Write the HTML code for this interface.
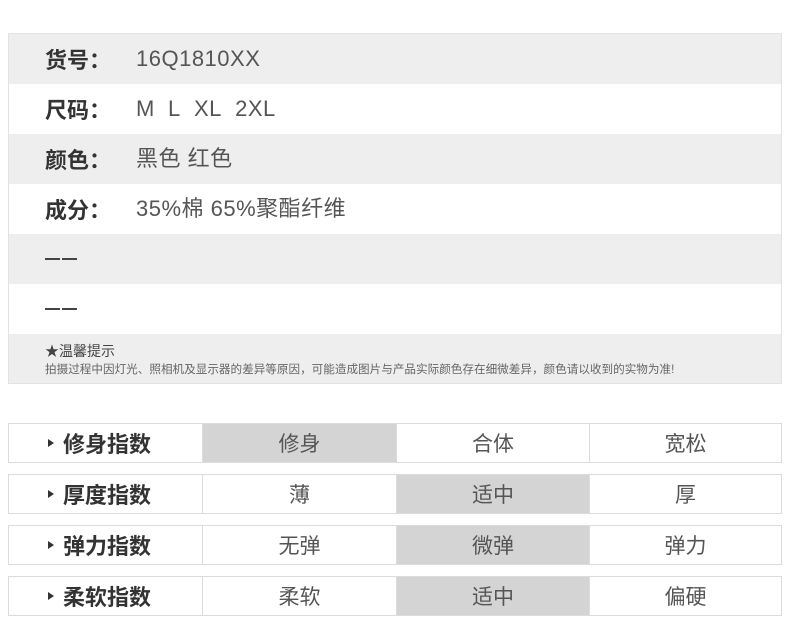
<!DOCTYPE html>
<html><head><meta charset="utf-8"><style>
*{margin:0;padding:0;box-sizing:border-box}
body{width:790px;height:638px;background:#fff;position:relative;overflow:hidden;font-family:"Liberation Sans","Noto Sans CJK SC",sans-serif;color:#444}
.box{position:absolute;left:8px;top:33px;width:774px;height:351px;border:1px solid #e2e2e2}
.r{position:absolute;left:0;width:772px;height:50px;line-height:50px}
.g{background:#eeeeee}
.lb{position:absolute;left:36px;top:0;font-size:22px;font-weight:bold;color:#333;font-family:"Noto Sans CJK SC",sans-serif}
.v{position:absolute;left:127px;top:0;font-size:22px;color:#555;letter-spacing:0.5px}
.dash{position:absolute;left:36px;top:24px;width:15px;height:2px;background:#444}
.dash2{left:53px}
.note{position:absolute;left:0;top:300px;width:772px;height:49px;background:#eeeeee}
.t{position:absolute;left:8px;width:774px;height:40px;border:1px solid #dcdcdc}
.c{position:absolute;top:0;height:38px;border-left:1px solid #dcdcdc;text-align:center;font-size:21px;line-height:38px;color:#555;font-family:"Noto Sans CJK SC",sans-serif;font-weight:normal}
.c0{left:0;width:193px;border-left:none;text-align:left;padding-left:54px;font-weight:bold;color:#333;font-size:22px}
.c0::before{content:"";position:absolute;left:39px;top:15px;border-left:6px solid #333;border-top:4px solid transparent;border-bottom:4px solid transparent}
.c1{left:193px;width:194px}.c2{left:387px;width:193px}.c3{left:580px;width:192px}
.h{background:#d4d4d4}
</style></head><body>
<div class="box">
<div class="r g" style="top:0"><span class="lb">货号：</span><span class="v">16Q1810XX</span></div>
<div class="r" style="top:50px"><span class="lb">尺码：</span><span class="v">M&nbsp; L&nbsp; XL&nbsp; 2XL</span></div>
<div class="r g" style="top:100px"><span class="lb">颜色：</span><span class="v">黑色&nbsp;红色</span></div>
<div class="r" style="top:150px"><span class="lb">成分：</span><span class="v">35%棉&nbsp;65%聚酯纤维</span></div>
<div class="r g" style="top:200px"><span class="dash"></span><span class="dash dash2"></span></div>
<div class="r" style="top:250px"><span class="dash"></span><span class="dash dash2"></span></div>
<div class="note"><div style="position:absolute;left:36px;top:7px;font-size:14px;color:#444">★温馨提示</div><div style="position:absolute;left:36px;top:27px;font-size:11.6px;color:#666;white-space:nowrap">拍摄过程中因灯光、照相机及显示器的差异等原因，可能造成图片与产品实际颜色存在细微差异，颜色请以收到的实物为准!</div></div>
</div>
<div class="t" style="top:423px"><div class="c c0">修身指数</div><div class="c c1 h">修身</div><div class="c c2">合体</div><div class="c c3">宽松</div></div>
<div class="t" style="top:474px"><div class="c c0">厚度指数</div><div class="c c1">薄</div><div class="c c2 h">适中</div><div class="c c3">厚</div></div>
<div class="t" style="top:525px"><div class="c c0">弹力指数</div><div class="c c1">无弹</div><div class="c c2 h">微弹</div><div class="c c3">弹力</div></div>
<div class="t" style="top:576px"><div class="c c0">柔软指数</div><div class="c c1">柔软</div><div class="c c2 h">适中</div><div class="c c3">偏硬</div></div>
</body></html>
